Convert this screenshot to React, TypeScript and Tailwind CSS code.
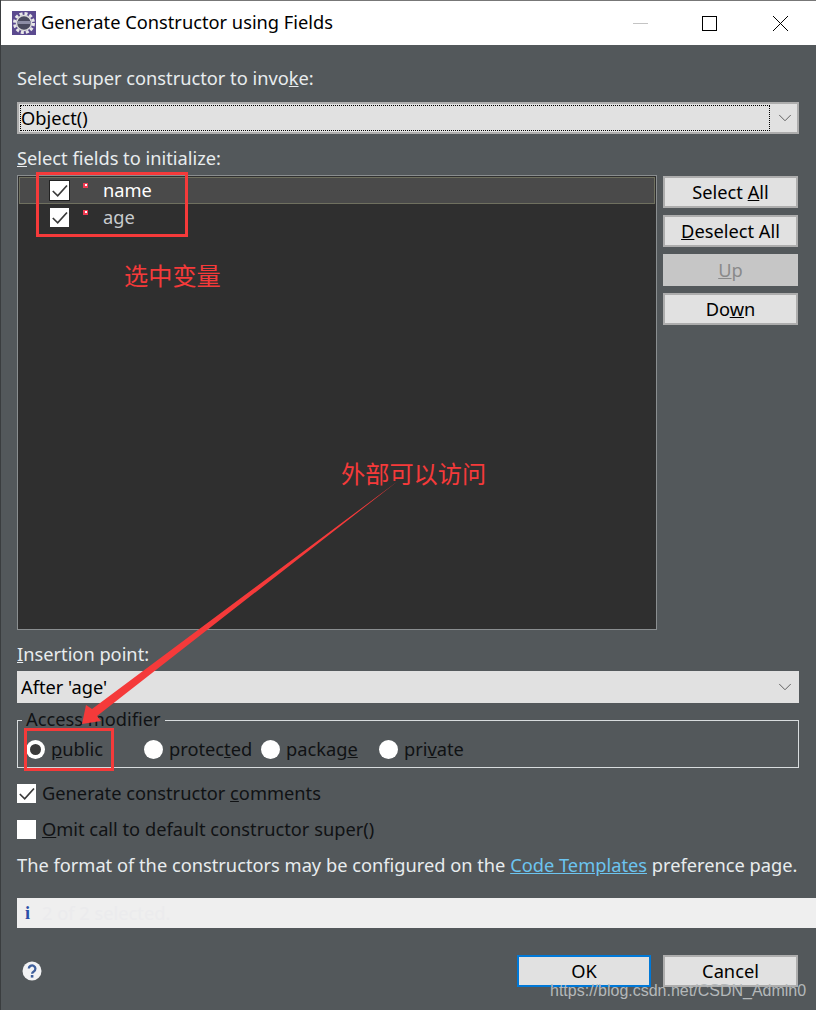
import { ChevronDown } from "lucide-react";

function Btn({
  children,
  disabled,
  primary,
}: {
  children: React.ReactNode;
  disabled?: boolean;
  primary?: boolean;
}) {
  return (
    <div
      className={
        "flex h-8 items-center justify-center border-2 " +
        (disabled
          ? "w-[135px] border-[#c6c6c6] bg-[#c6c6c6] text-[#8a8a8a]"
          : primary
            ? "w-[134px] border-[#0078d7] bg-[#e1e1e1] text-black"
            : "w-[135px] border-[#adadad] bg-[#e1e1e1] text-black")
      }
    >
      <span>{children}</span>
    </div>
  );
}

function Radio({ label, on }: { label: React.ReactNode; on?: boolean }) {
  return (
    <div className="flex items-center gap-[6px]">
      <div className="flex h-[19px] w-[19px] items-center justify-center rounded-full bg-white">
        {on && <div className="h-[11px] w-[11px] rounded-full bg-[#3a3a3a]" />}
      </div>
      <span className="text-[#101214]">{label}</span>
    </div>
  );
}

function Tick({ on, strong }: { on?: boolean; strong?: boolean }) {
  return (
    <div
      className={
        "h-[19px] w-[19px] bg-white " +
        (strong ? "outline outline-1 outline-[#222]" : "")
      }
    >
      {on && (
        <svg viewBox="0 0 19 19" className="h-[19px] w-[19px]">
          <path d="M2.8 10 7.7 14.8 17 4.5" fill="none" stroke="#3a3a3a" strokeWidth="1.7" />
        </svg>
      )}
    </div>
  );
}

function FieldRow({ name, selected }: { name: string; selected?: boolean }) {
  return (
    <div
      className={
        "flex h-[27px] items-center border " +
        (selected
          ? "border-[#6f705f] bg-[#4a4a4a] text-white"
          : "border-transparent text-[#c8ccce]")
      }
    >
      <div className="ml-[30px]">
        <Tick on strong={selected} />
      </div>
      <div className="mb-[11px] ml-[14px] flex h-[5px] w-[5px] items-center justify-center bg-[#ee3b52]">
        <div className="h-[2px] w-[2px] bg-white" />
      </div>
      <span className="mb-[2px] ml-[15px]">{name}</span>
    </div>
  );
}

export default function App() {
  return (
    <div
      className="relative h-[1010px] w-[816px] overflow-hidden text-[18.25px] leading-[24px] text-[#e8ecee]"
      style={{ fontFamily: "'Noto Sans', 'Noto Sans CJK SC', sans-serif" }}
    >
      <div className="flex h-full flex-col border-l border-[#3a3d3f] bg-[#53585b]">
        {/* Title bar */}
        <div className="flex h-[45px] shrink-0 items-center border-t border-[#777] bg-white text-black">
          <svg viewBox="0 0 24 24" className="ml-[11px] h-6 w-6 shrink-0">
            <rect width="24" height="24" fill="#5b4a8f" />
            <circle cx="12" cy="12" r="9.5" fill="none" stroke="#e8e8e8" strokeWidth="3" strokeDasharray="3 2" />
            <circle cx="12" cy="12" r="7.5" fill="#4a4a5e" stroke="#ddd" strokeWidth="1.5" />
            <rect x="5" y="10" width="14" height="3" fill="#8d8da5" />
          </svg>
          <span className="mb-[2px] ml-[5px]">Generate Constructor using Fields</span>
          <div className="ml-auto flex items-center">
            <div className="h-px w-[15px] bg-[#c4c4c4]" />
            <div className="ml-[54px] h-[15px] w-[15px] border border-black" />
            <svg viewBox="0 0 15 15" className="ml-[56px] mr-[28px] h-[15px] w-[15px]">
              <path d="M0 0 15 15M15 0 0 15" stroke="#000" strokeWidth="1" />
            </svg>
          </div>
        </div>

        <div className="flex flex-1 flex-col pl-4 pr-[17px]">
          <div className="mt-[21px]">
            Select super constructor to invo<span className="underline">k</span>e:
          </div>
          <div className="mt-[12px] flex h-8 items-center border-2 border-[#adadad] bg-[#e1e1e1] text-black">
            <div className="ml-[1px] flex h-[26px] flex-1 items-center border border-dotted border-black">
              Object()
            </div>
            <div className="flex w-[27px] justify-end pr-px">
              <ChevronDown className="h-[22px] w-[22px] text-[#555]" strokeWidth={1} />
            </div>
          </div>

          <div className="mt-[12px]">
            <span className="underline">S</span>elect fields to initialize:
          </div>

          <div className="mt-[5px] flex items-start">
            <div className="h-[455px] w-[640px] border border-[#8a8e90] bg-[#2f2f2f] p-px">
              <FieldRow name="name" selected />
              <FieldRow name="age" />
            </div>
            <div className="ml-[6px] mt-px flex flex-col gap-[7px]">
              <Btn>
                Select <span className="underline">A</span>ll
              </Btn>
              <Btn>
                <span className="underline">D</span>eselect All
              </Btn>
              <Btn disabled>
                <span className="underline">U</span>p
              </Btn>
              <Btn>
                Do<span className="underline">w</span>n
              </Btn>
            </div>
          </div>

          <div className="mt-[12px]">
            <span className="underline">I</span>nsertion point:
          </div>
          <div className="mt-[5px] flex h-8 items-center bg-[#e1e1e1] pl-1 text-black">
            <span className="flex-1">After 'age'</span>
            <ChevronDown className="mr-[3px] h-[22px] w-[22px] text-[#555]" strokeWidth={1} />
          </div>

          <div className="relative mt-[17px] flex h-[48px] items-center border border-[#d8dcde] pl-[8px] pt-[10px] text-[#101214]">
            <span className="absolute -top-[14px] left-[4px] bg-[#53585b] px-1">Access modifier</span>
            <div className="flex w-[118px]">
              <Radio on label={<><span className="underline">p</span>ublic</>} />
            </div>
            <div className="flex w-[117px]">
              <Radio label={<>protec<span className="underline">t</span>ed</>} />
            </div>
            <div className="flex w-[118px]">
              <Radio label={<>packag<span className="underline">e</span></>} />
            </div>
            <Radio label={<>pri<span className="underline">v</span>ate</>} />
          </div>

          <div className="mt-[13px] flex items-center gap-[6px] text-[#101214]">
            <Tick on />
            <span>
              Generate constructor <span className="underline">c</span>omments
            </span>
          </div>
          <div className="mt-[12px] flex items-center gap-[6px] text-[#101214]">
            <Tick />
            <span>
              <span className="underline">O</span>mit call to default constructor super()
            </span>
          </div>

          <div className="mt-[12px] whitespace-nowrap">
            The format of the constructors may be configured on the{" "}
            <span className="text-[#6cc4f0] underline">Code Templates</span> preference page.
          </div>

          <div className="-mr-[17px] mt-[21px] flex h-[30px] items-center bg-[#efefef] pl-2">
            <span className="font-['Liberation_Serif'] font-bold text-[#2a4fa8]">i</span>
            <span className="ml-[12px] text-[#ebebed]">2 of 2 selected.</span>
          </div>

          <div className="mt-[27px] flex items-center">
            <svg viewBox="0 0 20 20" className="ml-[5px] h-[20px] w-[20px]">
              <circle cx="10" cy="10" r="9.5" fill="#f2f2f4" />
              <path d="M6.8 7.6a3.3 3.2 0 1 1 5 2.8c-1.2.7-1.7 1.2-1.7 2.4" fill="none" stroke="#3f5f9c" strokeWidth="2.3" />
              <rect x="8.8" y="14" width="2.6" height="2.6" fill="#3f5f9c" />
            </svg>
            <div className="ml-auto flex gap-3 pr-px">
              <Btn primary>OK</Btn>
              <Btn>Cancel</Btn>
            </div>
          </div>
        </div>
      </div>

      {/* Red annotations drawn over the screenshot */}
      <div className="absolute left-[36px] top-[172px] h-[65px] w-[152px] border-[3px] border-[#f53a3a]" />
      <div className="absolute left-[24px] top-[728px] h-[43px] w-[90px] border-[3px] border-[#f53a3a]" />
      <div
        className="absolute left-[124px] top-[259px] text-[24.2px] leading-[32px] text-[#f53a3a]"
        style={{ fontFamily: "'Noto Sans CJK SC', sans-serif" }}
      >
        选中变量
      </div>
      <div
        className="absolute left-[341px] top-[457px] text-[24.2px] leading-[32px] text-[#f53a3a]"
        style={{ fontFamily: "'Noto Sans CJK SC', sans-serif" }}
      >
        外部可以访问
      </div>
      <svg className="absolute inset-0 h-full w-full" viewBox="0 0 816 1010">
        <polygon points="398,481 97,716 101,721 82,724 86,705 92,709" fill="#f53a3a" />
      </svg>
      <div
        className="absolute left-[550px] top-[980px] text-[16px] leading-[22px] text-[#b4b8ba]"
        style={{ fontFamily: "'Liberation Sans', sans-serif" }}
      >
        https://blog.csdn.net/CSDN_Admin0
      </div>
    </div>
  );
}
